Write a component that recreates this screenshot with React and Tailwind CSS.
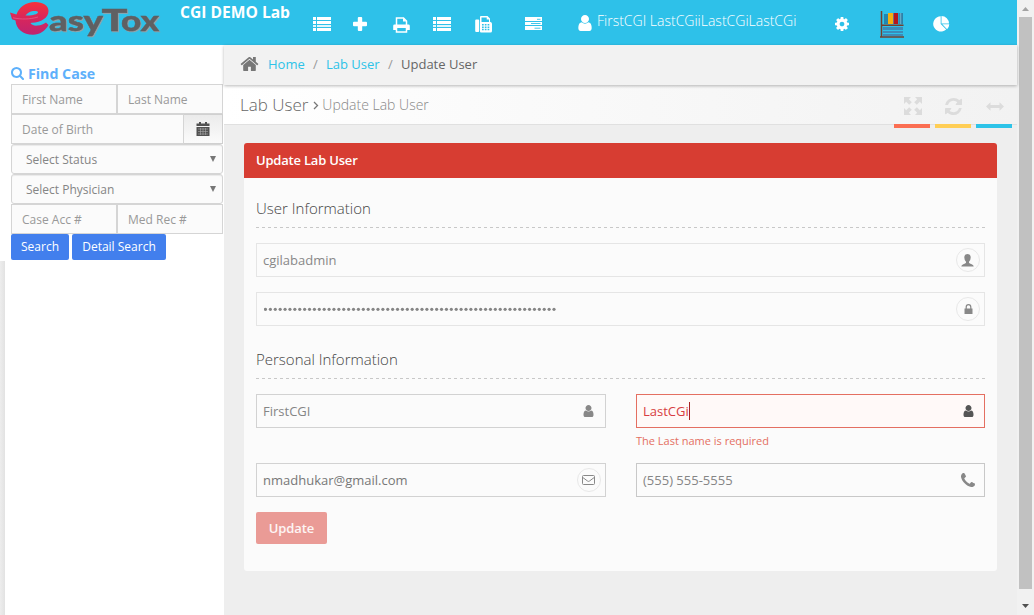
import React from "react";

const PATHS = {
  user: "M1280 1399q0 109 -62.5 187t-150.5 78h-854q-88 0 -150.5 -78t-62.5 -187q0 -85 8.5 -160.5t31.5 -152t58.5 -131t94 -89t134.5 -34.5q131 128 313 128t313 -128q76 0 134.5 34.5t94 89t58.5 131t31.5 152t8.5 160.5zM1024 512q0 159-112.5 271.5T640 896 368.5 783.5 256 512t112.5-271.5T640 128t271.5 112.5T1024 512z",
  cog: "M1024 896q0-106-75-181t-181-75-181 75-75 181 75 181 181 75 181-75 75-181zm512-109v222q0 12-8 23t-20 13l-185 28q-19 54-39 91 35 50 107 138 10 12 10 25t-9 23q-27 37-99 108t-94 71q-12 0-26-9l-138-108q-44 23-91 38-16 136-29 186-7 28-36 28h-222q-14 0-24.5-8.5t-11.5-21.5l-28-184q-49-16-90-37l-141 107q-10 9-25 9-14 0-25-11-126-114-165-168-7-10-7-23 0-12 8-23 15-21 51-66.5t54-70.5q-27-50-41-99l-183-27q-13-2-21-12.5t-8-23.5v-222q0-12 8-23t19-13l186-28q14-46 39-92-40-57-107-138-10-12-10-24 0-10 9-23 26-36 98.5-107.5t94.5-71.5q13 0 26 10l138 107q44-23 91-38 16-136 29-186 7-28 36-28h222q14 0 24.5 8.5t11.5 21.5l28 184q49 16 90 37l142-107q9-9 24-9 13 0 25 10 129 119 165 170 7 8 7 22 0 12-8 23-15 21-51 66.5t-54 70.5q26 50 41 98l183 28q13 2 21 12.5t8 23.5z",
  home: "M1408 992v480q0 26-19 45t-45 19H960v-384H704v384H320q-26 0-45-19t-19-45V992q0-1 .5-3t.5-3l575-474 575 474q1 2 1 6zm223-69l-62 74q-8 9-21 11h-3q-13 0-21-7L832 424 140 1001q-12 8-24 7-13-2-21-11l-62-74q-8-10-7-23.5t11-21.5l719-599q32-26 76-26t76 26l244 204V288q0-14 9-23t23-9h192q14 0 23 9t9 23v408l219 182q10 8 11 21.5t-7 23.5z",
  search: "M1152 832q0-185-131.5-316.5T704 384 387.5 515.5 256 832t131.5 316.5T704 1280t316.5-131.5T1152 832zm512 832q0 52-38 90t-90 38q-54 0-90-38l-343-342q-179 124-399 124-143 0-273.5-55.5t-225-150-150-225T0 832t55.5-273.5 150-225 225-150T704 128t273.5 55.5 225 150 150 225T1408 832q0 220-124 399l343 343q37 37 37 90z",
  phone: "M1408 1240q0 27-10 70.5t-21 68.5q-21 50-122 106-94 51-186 51-27 0-53-3.5t-57.5-12.5-47-14.5T856 1485.5t-49-18.5q-98-35-175-83-127-79-264-216T152 904q-48-77-83-175-3-9-18.5-49T30 624.5t-14.5-47T3 520t-3-53q0-92 51-186 56-101 106-122 25-11 68.5-21t70.5-10q14 0 21 3 18 6 53 76 11 19 30 54t35 63.5 31 53.5q3 4 17.5 25t21.5 35.5 7 28.5q0 20-28.5 50t-62 55-62 53-28.5 46q0 9 5 22.5t8.5 20.5 14 24 11.5 19q76 137 174 235t235 174q2 1 19 11.5t24 14 20.5 8.500 22.500 5q18 0 46-28.5t53-62 55-62 50-28.5q14 0 28.5 7t35.5 21.5 25 17.5q25 15 53.5 31t63.5 35 54 30q70 35 76 53 3 7 3 21z",
  refresh: "M1511 1056q0 5-1 7-64 268-268 434.5T764 1664q-146 0-282.5-55T238 1452l-129 129q-19 19-45 19t-45-19-19-45v-448q0-26 19-45t45-19h448q26 0 45 19t19 45-19 45l-137 137q71 66 161 102t187 36q134 0 250-65t186-179q11-17 53-117 8-23 30-23h192q13 0 22.5 9.5t9.5 22.5zm25-800v448q0 26-19 45t-45 19h-448q-26 0-45-19t-19-45 19-45l138-138Q969 384 768 384q-134 0-250 65T332 628q-11 17-53 117-8 23-30 23H50q-13 0-22.5-9.5T18 736v-7q65-268 270-434.5T768 128q146 0 284 55.5T1297 340l130-129q19-19 45-19t45 19 19 45z",
};

const Glyph = ({ name, box, className }) => (
  <svg viewBox={box} className={"shrink-0 " + className} fill="currentColor" aria-hidden="true">
    <path d={PATHS[name]} />
  </svg>
);

const Logo = () => (
  <svg width="160" height="44" viewBox="0 0 160 44" className="ml-2 shrink-0">
    <defs>
      <linearGradient id="mark" x1="0" y1="0" x2="0" y2="1">
        <stop offset="0" stopColor="#f5333a" />
        <stop offset="0.5" stopColor="#d8265c" />
        <stop offset="1" stopColor="#bf2470" />
      </linearGradient>
    </defs>
    <path
      fill="url(#mark)"
      fillRule="evenodd"
      d="M2 12.500 L8.500 14.500 C11 7 18 2 27 2 C35 2 40.500 5.500 40.500 11 C40.500 18 33 22.300 24 22.800 L22.500 23 C24 25 26.500 26 29.500 25.600 C33 25.200 36 24 38 22.500 L40.500 25 C37 31 32 34.700 25 34.700 C15 34.700 8 29 7.500 20.500 L4 19.300 Z M17.500 15.500 C23 16 30 14.500 30 12.300 C30 11 27.500 10.700 25 11 C22 11.500 19.500 13 17.500 15.500 Z"
    />
    <path d="M5 17.800C13 19.500 22 19.500 30 17" fill="none" stroke="#e9618a" strokeWidth="0.700" />
    <text y="30.700" fontWeight="900" fontFamily="Lato, sans-serif" fill="#5f6062" stroke="#5f6062" strokeWidth="0.400" className="drop-shadow-[1px_1px_0_#8fa3ab]">
      <tspan x="41" fontSize="28" textLength="54" lengthAdjust="spacingAndGlyphs">asy</tspan>
      <tspan x="93.500" fontSize="31" textLength="26" lengthAdjust="spacingAndGlyphs">T</tspan>
      <tspan x="113" fontSize="28" textLength="38" lengthAdjust="spacingAndGlyphs">ox</tspan>
    </text>
  </svg>
);

const ListIcon = ({ className }) => (
  <svg width="18" height="14" viewBox="0 0 18 14" fill="#fff" className={"shrink-0 " + className}>
    <path d="M0 0h3v3H0zM4 0h14v3H4zM0 4h3v3H0zM4 4h14v3H4zM0 11h3v3H0zM4 11h14v3H4z" />
    <path d="M0 8h3v2H0zM4 8h14v2H4z" opacity=".85" />
  </svg>
);

const TopBar = () => (
  <header className="flex h-[45px] shrink-0 items-start bg-[#2ec1e9] text-white">
    <Logo />
    <b className="ml-3 w-[133px] shrink-0 text-[15.6px] leading-6 font-bold">CGI DEMO Lab</b>
    <ListIcon className="mt-[17px]" />
    <svg width="14" height="14" viewBox="0 0 14 14" fill="#fff" className="mt-[17px] ml-[22px] shrink-0">
      <path d="M5.800 0h2.400q1 0 1 1v3.800H13q1 0 1 1v2.400q0 1-1 1H9.200V13q0 1-1 1H5.800q-1 0-1-1V9.200H1q-1 0-1-1V5.800q0-1 1-1h3.800V1q0-1 1-1z" />
    </svg>
    <svg width="17" height="16" viewBox="0 0 17 16" className="mt-[17px] ml-[26px] shrink-0">
      <path d="M3.500 8V1h7l3 3v4" fill="none" stroke="#fff" strokeWidth="1.500" />
      <path d="M10 .5v4h4M1.500 7.500h14q1.300 0 1.300 1.300V13H13v-2H4v2H.2V8.800q0-1.300 1.300-1.300z" fill="#fff" />
      <path d="M3.500 10.500v4.500h10v-4.500" fill="none" stroke="#fff" strokeWidth="1.500" />
    </svg>
    <ListIcon className="mt-[17px] ml-[23px]" />
    <svg width="17" height="17" viewBox="0 0 17 17" className="mt-[16px] ml-6 shrink-0">
      <path fill="#fff" fillRule="evenodd" d="M1.200 3.500h2q1 0 1 1V15q0 1-1 1h-2q-1 0-1-1V4.500q0-1 1-1zM5 1q0-1 1-1h6.500L15 2.500v3.200q2 .3 2 2V15q0 1.500-1.500 1.500H6Q5 16.500 5 15.500zM6.500 1.400V6H14V3.600h-2.300V1.400zM7 8v1.500h1.700V8zm2.800 0v1.500h1.700V8zm2.800 0v1.500h1.700V8zM7 10.400v1.500h1.700v-1.500zm2.800 0v1.500h1.700v-1.500zm2.800 0v1.500h1.700v-1.500zM7 12.800v1.500h1.700v-1.500zm2.800 0v1.500h1.700v-1.500zm2.800 0v1.500h1.700v-1.500z" />
    </svg>
    <svg width="17" height="13" viewBox="0 0 17 13" className="mt-[17px] ml-[33px] shrink-0">
      <path d="M0 0h17v4H0zM0 5h17v3H0zM0 9h17v4H0z" fill="#fff" />
      <path d="M12 2.300h3.500M6 6.500h9.500M9.500 11.200h6" stroke="#2ec1e9" strokeWidth=".9" />
    </svg>
    <Glyph name="user" box="0 128 1280 1536" className="mt-[15px] ml-9 h-4 w-[14px]" />
    <span className="ml-[5px] w-[238px] shrink-0 text-[14px] leading-[42px] font-light whitespace-nowrap">FirstCGI LastCGiiLastCGiLastCGi</span>
    <Glyph name="cog" box="0 128 1536 1536" className="mt-[17px] size-[14px]" />
    <svg width="26" height="28" viewBox="0 0 26 28" className="mt-[10px] ml-[31px] shrink-0">
      <path d="M4 4h4v10H4z" fill="#2485ae" />
      <path d="M8 3h5v11H8z" fill="#f5b011" />
      <path d="M13.500 3h4.500v11h-4.500z" fill="#b5161c" />
      <path d="M18.500 3H23v11h-4.500z" fill="#2c81a8" />
      <path d="M20.500 3v11" stroke="#65a9c5" strokeWidth="1.500" />
      <path d="M3 17h20v3H3zM3 21h20v2H3zM3 24h20v2H3z" fill="#3c8cb8" />
      <path d="M1.500 1v26M1 15.300h22.500M0 27h24" stroke="#73402f" strokeWidth="1.500" />
    </svg>
    <svg width="17" height="16" viewBox="0 0 17 16" fill="#fff" className="mt-4 ml-[27px] shrink-0">
      <path d="M7.700.2V8l5.500 5.500A7.700 7.700 0 1 1 7.700.2zM8.500 0a7.500 7.500 0 0 1 7.500 7.500H8.500zM9.300 8.300h7a7.300 7.300 0 0 1-2.200 4.900z" />
    </svg>
  </header>
);

const SideInput = ({ text, className = "" }) => (
  <div className={"h-[30px] border border-[#d5d5d5] bg-[#fbfbfb] pl-[10px] text-[12px] leading-[29px] text-[#999] " + className}>{text}</div>
);

const SideSelect = ({ text }) => (
  <div className="flex h-[30px] items-center justify-between rounded-[3px] border border-[#d5d5d5] bg-[#fbfbfb] pr-[6px] pl-[14px] text-[12px] text-[#858585] shadow-[inset_0_1px_1px_rgba(0,0,0,0.07)]">
    <span className="pt-[2px]">{text}</span>
    <svg width="6" height="6" viewBox="0 0 6 6" className="mb-px"><path d="M0 0h6L3 6z" fill="#777" /></svg>
  </div>
);

const Sidebar = () => (
  <aside className="flex w-[224px] shrink-0 flex-col">
    <div className="h-[216px] bg-white pt-[19px] pl-[11px]">
      <div className="flex h-5 items-center pb-px text-[14.2px] font-bold text-[#5eb0fb]">
        <Glyph name="search" box="0 128 1664 1664" className="mr-1 size-[13px]" />
        Find Case
      </div>
      <div className="w-[212px]">
        <div className="flex">
          <SideInput text="First Name" className="w-[106px]" />
          <SideInput text="Last Name" className="w-[106px]" />
        </div>
        <div className="flex">
          <SideInput text="Date of Birth" className="w-[173px]" />
          <div className="flex h-[30px] flex-1 items-center justify-center border border-l-0 border-[#d0d0d0] bg-linear-to-b from-[#ebebeb] to-[#fbfbfb]">
            <svg width="14" height="14" viewBox="0 0 14 14" className="mr-px"><path d="M.5 1.500H3V0h2v1.500h4V0h2v1.500h2.500V4H.5zM.5 5h13v9H.5z" fill="#505050" /><path d="M2 7h10M2 9.500h10M2 12h10M4.500 6v7M7 6v7M9.500 6v7" stroke="#aaa" strokeWidth=".6" /></svg>
          </div>
        </div>
        <SideSelect text="Select Status" />
        <SideSelect text="Select Physician" />
        <div className="flex">
          <SideInput text="Case Acc #" className="w-[106px]" />
          <SideInput text="Med Rec #" className="w-[106px]" />
        </div>
      </div>
      <div className="flex gap-[3px] text-[12px] leading-[24px] text-white">
        <button className="h-[26px] w-[58px] rounded-[2px] bg-[#427fed]">Search</button>
        <button className="h-[26px] w-[94px] rounded-[2px] bg-[#427fed]">Detail Search</button>
      </div>
    </div>
    <div className="flex-1 bg-linear-to-r from-[#ededed] to-[#e2e2e2] bg-[length:5px_100%] bg-no-repeat pl-[5px]">
      <div className="h-full bg-white" />
    </div>
  </aside>
);

const Circle = ({ children }) => (
  <span className="flex size-6 items-center justify-center rounded-full border border-[#e8e8e8] text-[#888]">{children}</span>
);

const Field = ({ children, icon, className = "", iconPad = "pr-1" }) => (
  <div className={"flex h-[34px] items-center justify-between border pl-[6px] text-[13px] " + iconPad + " " + className}>
    <span className="flex items-center">{children}</span>
    {icon}
  </div>
);

const Value = ({ children }) => <span className="pt-[2px]">{children}</span>;

const SectionTitle = ({ children }) => (
  <div>
    <h2 className="text-[15px] leading-5 font-light text-[#444]">{children}</h2>
    <svg width="729" height="1" className="mt-[9px] block"><path d="M0 .5h729" stroke="#c8c8c8" strokeDasharray="3 3" /></svg>
  </div>
);

const Panel = () => (
  <section className="mt-[18px] ml-5 h-[428px] w-[753px] rounded-[3px] bg-[#fbfbfb]">
    <h1 className="h-[35px] rounded-t-[3px] bg-[#d73d32] pl-3 text-[13px] leading-[34px] font-semibold tracking-[-0.2px] text-white">Update Lab User</h1>
    <div className="px-3 pt-5">
      <SectionTitle>User Information</SectionTitle>
      <Field className="mt-[15px] border-[#e5e5e5] text-[#888]" icon={
        <Circle><svg width="13" height="13" viewBox="0 0 13 13" fill="currentColor" className="mr-px"><path d="M6.500 0q3.200 0 3.200 3.500Q9.700 6 8 7.800v1q.4.700 2.700 1.500Q12.700 11 12.700 12.600H.3Q.3 11 2.300 10.300 4.600 9.500 5 8.800v-1Q3.300 6 3.300 3.500 3.300 0 6.500 0z" /></svg></Circle>
      }><Value>cgilabadmin</Value></Field>
      <Field className="mt-[15px] border-[#e5e5e5] text-[#888]" icon={
        <Circle><svg width="9" height="10" viewBox="0 0 9 10" className="mb-px"><path d="M.5 4.500h8V10h-8z" fill="#888" /><path d="M2.200 5V3a2.300 2.300 0 0 1 4.600 0v2" fill="none" stroke="#888" strokeWidth="1.200" /></svg></Circle>
      }>
        <svg width="294" height="4" viewBox="0 0 294 4" className="ml-[1px]">
          {Array.from({ length: 60 }, (_, i) => <circle key={i} cx={1.500 + i * 4.890} cy="2.300" r="1.600" fill="#858585" />)}
        </svg>
      </Field>
      <div className="mt-[23px]"><SectionTitle>Personal Information</SectionTitle></div>
      <div className="mt-[15px] grid grid-cols-[350px_349px] gap-x-[30px]">
        <Field className="border-[#d2d2d2] text-[#858585]" iconPad="pr-[11px]" icon={<Glyph name="user" box="0 128 1280 1536" className="h-3 w-[11px] text-[#888]" />}><Value>FirstCGI</Value></Field>
        <div className="h-[69px]">
          <Field className="border-[#e46f61] bg-[#fff9f8] text-[#d73d42]" iconPad="pr-[10px]" icon={<Glyph name="user" box="0 128 1280 1536" className="h-3 w-[11px] text-[#555]" />}>
            <Value>LastCGi</Value><i className="h-[18px] w-px bg-[#a22]" />
          </Field>
          <p className="pt-[5px] text-[11px] leading-4 text-[#e46f61]">The Last name is required</p>
        </div>
        <Field className="border-[#d2d2d2] text-[#777]" icon={
          <Circle><svg width="13" height="10" viewBox="0 0 13 10" fill="none" stroke="currentColor" className="mr-px"><rect x=".5" y=".5" width="12" height="9" rx="1" /><path d="M.8 2.500 5.500 6q1 .8 2 0l4.700-3.500" /></svg></Circle>
        }><Value>nmadhukar@gmail.com</Value></Field>
        <Field className="border-[#c8c8c8] text-[#858585]" iconPad="pr-[9px]" icon={<Glyph name="phone" box="0 128 1408 1408" className="size-[14px] text-[#888]" />}><Value>(555) 555-5555</Value></Field>
      </div>
      <button className="mt-[15px] block h-8 w-[71px] rounded-[2px] bg-[#ea9b96] pt-px text-[13px] font-semibold tracking-[-0.1px] text-white/90">Update</button>
    </div>
  </section>
);

const Tool = ({ children, bar }) => (
  <div className={"mt-px flex h-[42px] w-9 items-center justify-center border-b-4 pt-[2px] pl-px text-[#dcdcdc] " + bar}>{children}</div>
);

const Main = () => (
  <main className="flex w-[793px] flex-col">
    <nav className="z-10 flex h-[40px] shrink-0 items-center bg-[#f2f2f2] pl-4 text-[13px] text-[#2dc3e8] shadow-[0_1px_3px_rgba(0,0,0,0.28)]">
      <Glyph name="home" box="0 256 1664 1280" className="mr-[9px] mb-[2px] h-[14px] w-[19px] text-[#777]" />
      <span className="w-[37px]">Home</span>
      <span className="w-[21px] text-center text-[#999]">/</span>
      <span className="w-[54px]">Lab User</span>
      <span className="w-[21px] text-center text-[#999]">/</span>
      <span className="text-[#666]">Update User</span>
    </nav>
    <div className="flex h-[40px] shrink-0 items-start border-b border-[#e0e0e0] bg-linear-to-r from-white to-[#f2f2f2] pr-[5px] pl-4">
      <div className="flex flex-1 items-center leading-[38px] font-light">
        <span className="text-[17px] text-[#666]">Lab User</span>
        <svg width="6" height="9" viewBox="0 0 6 9" fill="none" stroke="#777" strokeWidth="1.300" className="mt-[2px] mr-[3px] ml-[5px]"><path d="M1 1l3.500 3.500L1 8" /></svg>
        <span className="pt-[1px] text-[14px] text-[#888]">Update Lab User</span>
      </div>
      <div className="flex h-[43px] gap-[5px]">
        <Tool bar="border-[#fb6e52]">
          <svg width="18" height="18" viewBox="0 0 18 18" fill="currentColor"><path d="M0 0h7L4.800 2.200l3 3-2.600 2.600-3-3L0 7zM18 0v7l-2.200-2.200-3 3-2.600-2.600 3-3L11 0zM0 18v-7l2.200 2.200 3-3 2.600 2.600-3 3L7 18zM18 18h-7l2.200-2.200-3-3 2.600-2.600 3 3L18 11z" /></svg>
        </Tool>
        <Tool bar="border-[#ffce55]"><Glyph name="refresh" box="0 128 1536 1536" className="size-[17px]" /></Tool>
        <Tool bar="border-[#2dc3e8]">
          <svg width="18" height="9" viewBox="0 0 18 9" fill="currentColor"><path d="M0 4.500 4.500.3V3h9V.3L18 4.500l-4.500 4.200V6h-9v2.700z" /></svg>
        </Tool>
      </div>
    </div>
    <Panel />
  </main>
);

const Scrollbar = () => (
  <div className="flex h-full w-[17px] shrink-0 flex-col items-center bg-[#f1f1f1]">
    <svg width="7" height="4" viewBox="0 0 7 4" className="mt-[7px] mb-[6px]"><path d="M3.500 0 7 4H0z" fill="#a3a3a3" /></svg>
    <div className="h-[572px] w-[13px] bg-[#c1c1c1]" />
    <svg width="7" height="4" viewBox="0 0 7 4" className="mt-[15px]"><path d="M0 0h7L3.500 4z" fill="#505050" /></svg>
  </div>
);

export default function App() {
  return (
    <div className="flex h-[615px] w-[1034px] overflow-hidden font-['Open_Sans',sans-serif]">
      <div className="flex w-[1017px] flex-col bg-[#eee]">
        <TopBar />
        <div className="flex flex-1">
          <Sidebar />
          <Main />
        </div>
      </div>
      <Scrollbar />
    </div>
  );
}
